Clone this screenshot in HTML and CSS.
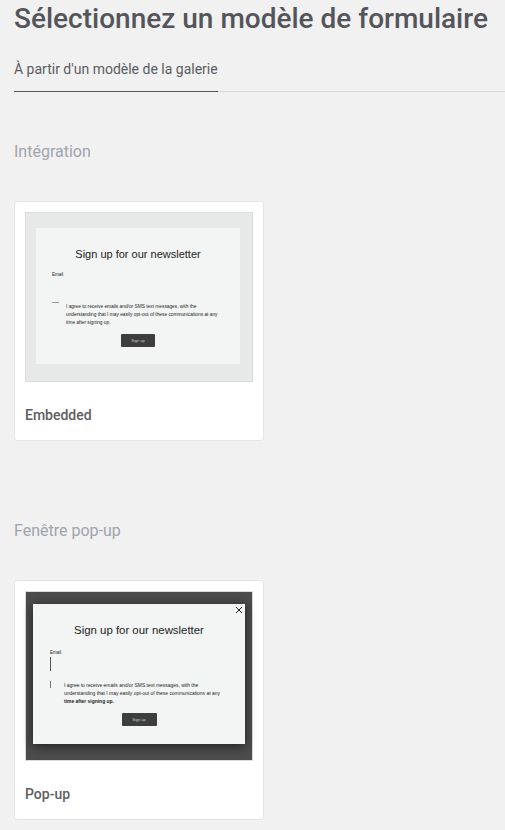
FILE: index.html
```html
<!DOCTYPE html>
<html lang="fr">
<head>
    <meta charset="UTF-8">
    <title>Sélectionnez un modèle de formulaire</title>
    <link rel="stylesheet" href="styles.css">
</head>
<body>
    <h1 class="pagetitle">Sélectionnez un modèle de formulaire</h1>
    <div class="tabs">
        <div class="tab">À partir d'un modèle de la galerie</div>
    </div>

    <h2 class="sectiontitle">Intégration</h2>
    <div class="card">
        <div class="preview embedded">
            <div class="form">
                <div class="formtitle">Sign up for our newsletter</div>
                <div class="emaillabel">Email</div>
                <div class="emailinput"></div>
                <div class="consent">
                    <span class="checkbox"></span>
                    <p>I agree to receive emails and/or SMS text messages, with the understanding that I may easily opt-out of these communications at any time after signing up.</p>
                </div>
                <div class="signup">Sign up</div>
            </div>
        </div>
        <div class="cardname">Embedded</div>
    </div>

    <h2 class="sectiontitle second">Fenêtre pop-up</h2>
    <div class="card">
        <div class="preview popup">
            <div class="form">
                <svg class="close" width="8" height="8" viewBox="0 0 8 8"><path d="M1 1L7 7M7 1L1 7" stroke="#222" stroke-width="1" fill="none"/></svg>
                <div class="formtitle">Sign up for our newsletter</div>
                <div class="emaillabel">Email</div>
                <div class="emailinput"></div>
                <div class="consent">
                    <span class="checkbox"></span>
                    <p>I agree to receive emails and/or SMS text messages, with the understanding that I may easily opt-out of these communications at any <b>time after signing up.</b></p>
                </div>
                <div class="signup">Sign up</div>
            </div>
        </div>
        <div class="cardname">Pop-up</div>
    </div>
</body>
</html>
```

FILE: styles.css
```css
*{
    margin: 0;
    padding: 0;
    box-sizing: border-box;
}
body{
    background-color: #f1f1f1;
    font-family: Roboto, "Liberation Sans", sans-serif;
    padding-left: 14px;
    height: 830px;
    overflow: hidden;
}
.pagetitle{
    font-size: 28px;
    font-weight: 500;
    line-height: 38px;
    color: #54555b;
}
.tabs{
    margin-top: 10px;
    border-bottom: 1px solid #d8d8d8;
    height: 44px;
}
.tab{
    width: 204px;
    height: 44px;
    font-size: 14px;
    line-height: 42px;
    color: #5b5c62;
    border-bottom: 1px solid #54555b;
}
.sectiontitle{
    margin-top: 49px;
    font-size: 16px;
    font-weight: 400;
    line-height: 22px;
    color: #a0a4ae;
}
.second{
    margin-top: 79px;
}
.card{
    margin-top: 38px;
    width: 250px;
    height: 240px;
    padding: 10px;
    background-color: #fff;
    border: 1px solid #e6e6e6;
    border-radius: 3px;
}
.preview{
    width: 228px;
    height: 170px;
    border: 1px solid #dcdcdc;
    display: flex;
}
.embedded{
    background-color: #e7e9e8;
    padding: 15px 0 0 10px;
}
.popup{
    background-color: #4b4c4b;
    padding: 12px 0 0 7px;
}
.form{
    background-color: #f3f5f4;
    color: #222;
    font-family: "Liberation Sans", Arial, sans-serif;
    position: relative;
}
.embedded .form{
    width: 204px;
    height: 136px;
    padding: 19px 16px 0;
}
.popup .form{
    width: 212px;
    height: 140px;
    padding: 19px 17px 0;
    box-shadow: 0 2px 10px rgba(0,0,0,0.6);
}
.formtitle{
    font-size: 11px;
    line-height: 14px;
    text-align: center;
    white-space: nowrap;
}
.popup .formtitle{
    font-size: 11.4px;
}
.emaillabel{
    font-size: 4.5px;
    line-height: 5px;
    margin-top: 11px;
}
.popup .emaillabel{
    margin-top: 13px;
}
.emailinput{
    height: 20px;
}
.popup .emailinput{
    height: 14px;
    margin-top: 2px;
    border-left: 1px solid #555;
}
.consent{
    display: flex;
    gap: 7px;
    margin-top: 5px;
}
.popup .consent{
    margin-top: 9px;
}
.checkbox{
    flex: none;
    width: 7px;
    height: 7px;
    border-top: 1px solid #999;
}
.popup .checkbox{
    margin-top: 1px;
    border-top: 0;
    border-left: 1px solid #777;
}
.consent p{
    width: 155px;
    padding-top: 1px;
    font-size: 4.8px;
    line-height: 7.75px;
}
.popup .consent p{
    width: 160px;
    padding-top: 2px;
    font-size: 4.95px;
    line-height: 8px;
}
.signup{
    margin: 8px auto 0;
    width: 34px;
    height: 13px;
    background-color: #3d3d3d;
    color: #ccc;
    border-radius: 1px;
    font-size: 4px;
    line-height: 13px;
    text-align: center;
}
.popup .signup{
    margin-top: 7px;
    width: 35px;
}
.close{
    position: absolute;
    top: 2px;
    right: 2px;
}
.cardname{
    margin-top: 23px;
    font-size: 14px;
    font-weight: 500;
    line-height: 20px;
    color: #5e5d62;
}
```
